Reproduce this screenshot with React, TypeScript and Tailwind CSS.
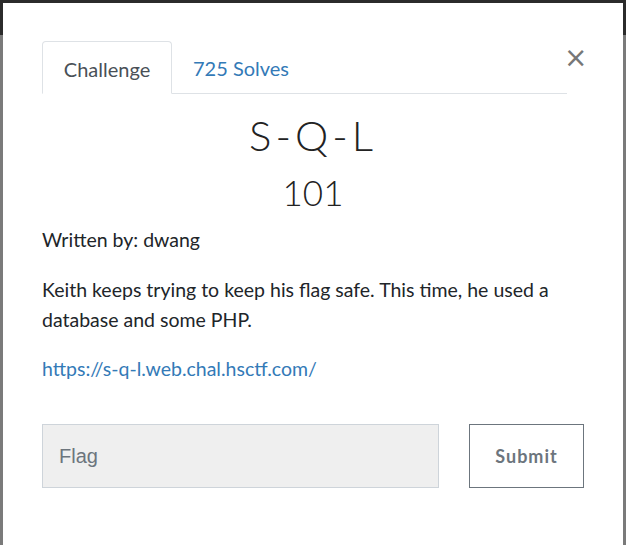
export default function App() {
  return (
    <div className="relative h-[545px] w-[626px] overflow-hidden bg-[linear-gradient(to_bottom,#2b2b2b_0px,#2b2b2b_35px,#7a7a7a_35px)] font-['Lato','Open_Sans',sans-serif] text-[#212529]">
      <div className="absolute left-[3px] top-[3px] h-[560px] w-[620px] bg-white px-[39px] pt-[38px]">
        <div className="flex items-start">
          <div className="flex flex-1 border-b border-[#dee2e6]">
            <div className="-mb-px flex h-[53px] w-[130px] items-center justify-center rounded-t-[4px] border border-b-white border-[#dee2e6] bg-white pt-[2px] text-[20px] text-[#495057]">
              Challenge
            </div>
            <div className="flex h-[52px] items-center px-[21px] pt-[2px] text-[20px] text-[#337ab7]">
              725 Solves
            </div>
          </div>
          <button className="mt-[2px] w-[17px] -translate-x-[3px] text-center font-['DejaVu_Sans',sans-serif] text-[28px] leading-[30px] text-[#777]">
            ×
          </button>
        </div>

        <h1 className="mt-[17px] text-center text-[42px] font-light leading-[48px] tracking-[4px] text-[#222]">
          S-Q-L
        </h1>
        <h2 className="mt-[10px] text-center text-[35px] font-light leading-[46px] text-[#222]">101</h2>

        <p className="mt-[12px] text-[19.5px] leading-[26px]">Written by: dwang</p>
        <p className="mt-[22px] w-[545px] text-[19.5px] leading-[30px]">
          Keith keeps trying to keep his flag safe. This time, he used a database and some PHP.
        </p>
        <p className="mt-[19px] text-[19.5px] leading-[30px] text-[#337ab7]">
          https://s-q-l.web.chal.hsctf.com/
        </p>

        <div className="mt-[40px] flex w-[542px] items-center gap-[30px]">
          <div className="flex h-[64px] w-[397px] items-center border border-[#ced4da] bg-[#efefef] px-[16px] font-['Liberation_Sans',Arial,sans-serif] text-[20px] text-[#6c757d]">
            Flag
          </div>
          <button className="h-[64px] w-[115px] border border-[#6c757d] bg-white text-[18px] font-bold tracking-[1px] text-[#6c757d]">
            Submit
          </button>
        </div>
      </div>
    </div>
  );
}
